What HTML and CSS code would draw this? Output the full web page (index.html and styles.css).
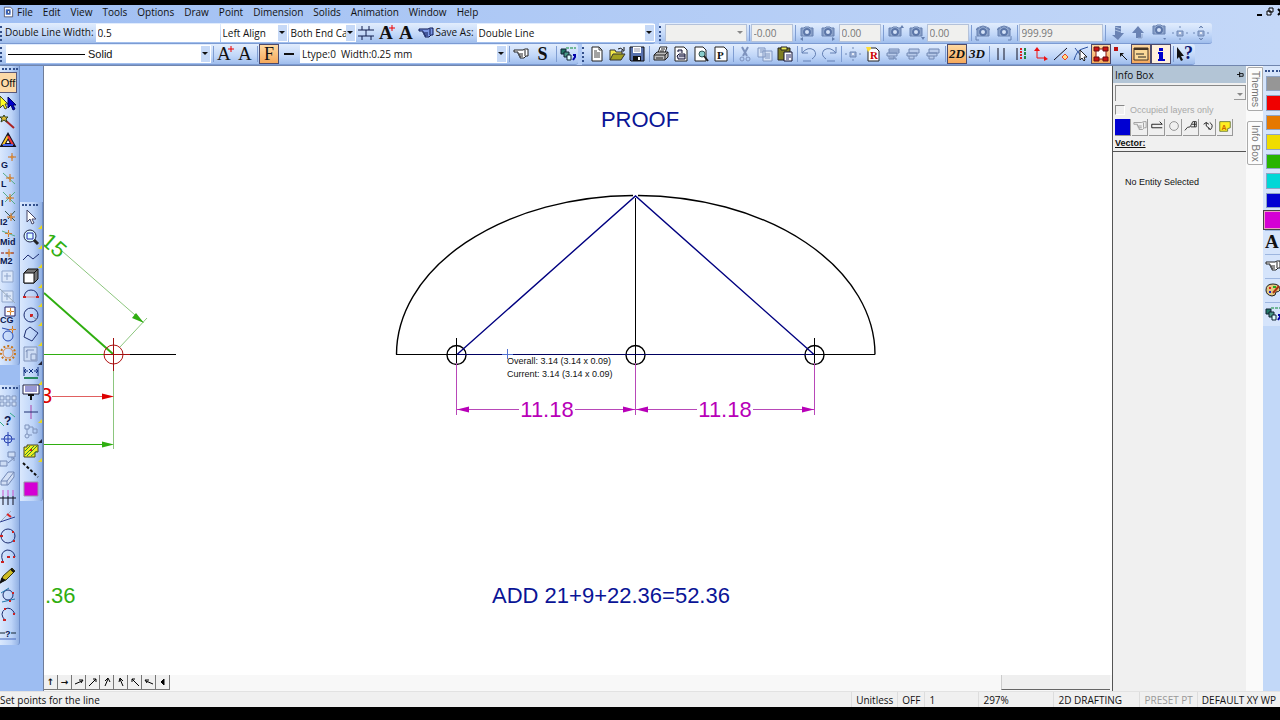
FILE: index.html
```html
<!DOCTYPE html>
<html lang="en">

<head>
    <meta charset="utf-8">
    <title>2D Drafting</title>
    <link rel="stylesheet" href="styles.css">
</head>

<body>
    <!-- shared icon shapes -->
    <svg class="defs" aria-hidden="true">
        <symbol id="camera" viewBox="0 0 16 16">
            <path d="M2 3h3l1-1h4l1 1h3v8H2z" fill="#a9bede" stroke="#6680b0" />
            <circle cx="8" cy="7" r="3" fill="#d5e3f8" stroke="#5c76a8" stroke-width="2" />
            <path d="M3 3v8M13 3v8" stroke="#6680b0" />
        </symbol>
        <symbol id="hand" viewBox="0 0 16 16">
            <path d="M1 4h9l2-1h3v7h-2l-2 2H7v-2H6V8H5V6H1zM6 8h4M7 10h3M12 4v6" />
        </symbol>
        <symbol id="layers" viewBox="0 0 16 16">
            <path d="M1 3h5v5H1z" fill="#276" stroke="#123" />
            <path d="M4 6h5v5H4z" fill="#4a9a88" stroke="#123" />
            <path d="M7 9h4v5H7z" fill="#dff" stroke="#123" />
            <path d="M6 2h3M10 2h3M14 2h2" stroke="#0a8a30" />
            <path d="M13 9h2v2l-2 3" fill="none" stroke="#00a" stroke-width="2" />
        </symbol>
        <symbol id="spark" viewBox="0 0 8 8">
            <path d="M4 0v8M0 4h8" stroke="#d07018" />
            <circle cx="4" cy="4" r="1" fill="#fff3a0" stroke="#d07018" />
        </symbol>
        <symbol id="move" viewBox="0 0 16 16">
            <path d="M5 6h6v5H5zM8 1v2M8 13v2M0 8h2M14 8h2" fill="#9fb3d8" stroke="#6f88b5" />
            <circle cx="8" cy="8" r="1" fill="#fff" />
        </symbol>
        <symbol id="plotter" viewBox="0 0 16 16">
            <path d="M4 3h10v4H4zM2 7h10v3H2zM4 10v3h5v-3" fill="#b9cbea" stroke="#7389b4" />
        </symbol>
        <symbol id="snapgrid" viewBox="0 0 16 16">
            <path d="M2 3h11v11H2zM7 5v7M4 8h7" fill="#dce8fa" stroke="#8fa5cb" />
        </symbol>
    </svg>

    <header class="top">
        <nav class="menu">
            <svg class="app-icon" viewBox="0 0 16 16">
                <path d="M2 1h9l3 3v11H2z" fill="#fff" stroke="#334" />
                <path d="M4 4h7v8H4z" fill="#3b6bd0" />
                <circle cx="8" cy="8" r="2" fill="#fff" stroke="#124" />
            </svg>
            <a href="#">File</a>
            <a href="#">Edit</a>
            <a href="#">View</a>
            <a href="#">Tools</a>
            <a href="#">Options</a>
            <a href="#">Draw</a>
            <a href="#">Point</a>
            <a href="#">Dimension</a>
            <a href="#">Solids</a>
            <a href="#">Animation</a>
            <a href="#">Window</a>
            <a href="#">Help</a>
            <svg class="window-buttons" viewBox="0 0 28 12">
                <path d="M1 9h5" stroke="#000" stroke-width="2" />
                <path d="M13 2h4v4h-4zM11 5h4v4h-4z" fill="#dde8fa" stroke="#000" />
                <path d="M22 3l6 6M28 3l-6 6" stroke="#000" stroke-width="2" />
            </svg>
        </nav>

        <div class="bars">
            <div class="bar">
                <i class="grip"></i>
                <label for="dlw">Double Line Width:</label>
                <input class="field w-width" id="dlw" value="0.5">
                <span class="combo w-align"><select aria-label="Alignment"><option>Left Align</option></select></span>
                <span class="combo w-align"><select aria-label="End caps"><option>Both End Caps</option></select></span>
                <button aria-label="Line joints"><svg viewBox="0 0 16 16"><path d="M0 5h16M0 11h16M4 1v4M11 1v4M8 5v6M4 11v4M13 11v4" stroke="#111d4d" /></svg></button>
                <button aria-label="Add text style"><svg viewBox="0 0 16 16"><text x="1" y="14" class="glyph-a">A</text><path d="M14 0v6M11 3h6" stroke="#e00" /></svg></button>
                <button aria-label="Text style"><svg viewBox="0 0 16 16"><text x="1" y="14" class="glyph-a">A</text></svg></button>
                <button aria-label="Pick style"><svg viewBox="0 0 16 16" fill="#7d98e6" stroke="#0b1650"><use href="#hand" /></svg></button>
                <label for="save">Save As:</label>
                <span class="combo w-save"><select id="save"><option>Double Line</option></select></span>
            </div>
            <div class="bar off">
                <i class="grip"></i>
                <span class="combo w-view"><select aria-label="View" disabled><option></option></select></span>
                <i class="sep"></i>
                <input class="field w-num" aria-label="Angle" value="-0.00" disabled>
                <i class="sep"></i>
                <button aria-label="Camera left" disabled><svg viewBox="0 0 16 16"><use href="#camera" /><path d="M4 12v4l-3-2z" fill="#6680b0" /></svg></button>
                <button aria-label="Camera right" disabled><svg viewBox="0 0 16 16"><use href="#camera" /><path d="M12 12v4l3-2z" fill="#6680b0" /></svg></button>
                <input class="field w-num" aria-label="Rotation" value="0.00" disabled>
                <i class="sep"></i>
                <button aria-label="Camera up" disabled><svg viewBox="0 0 16 16"><use href="#camera" /><path d="M13 3h4l-2-3z" fill="#6680b0" /></svg></button>
                <button aria-label="Camera down" disabled><svg viewBox="0 0 16 16"><use href="#camera" /><path d="M13 12h4l-2 3z" fill="#6680b0" /></svg></button>
                <input class="field w-num" aria-label="Height" value="0.00" disabled>
                <i class="sep"></i>
                <button aria-label="Tilt left" disabled><svg viewBox="0 0 16 16"><use href="#camera" /><path d="M1 5Q8-3 15 5M1 11v4h3" fill="none" stroke="#6680b0" /></svg></button>
                <button aria-label="Tilt right" disabled><svg viewBox="0 0 16 16"><use href="#camera" /><path d="M1 5Q8-3 15 5M15 11v4h-3" fill="none" stroke="#6680b0" /></svg></button>
                <i class="sep"></i>
                <input class="field w-dist" aria-label="Distance" value="999.99" disabled>
                <i class="sep"></i>
                <button aria-label="Zoom in" disabled><svg viewBox="0 0 16 16"><path d="M6 1h6v7h3l-6 7-6-5h3z" fill="#6a83b4" /><path d="M6 2l6 2M6 5l6 2" stroke="#a9bede" /></svg></button>
                <button aria-label="Zoom out" disabled><svg viewBox="0 0 16 16"><path d="M8 1l6 7h-3v5H6V8H2z" fill="#6a83b4" /><path d="M8 13h4V9" fill="none" stroke="#8fa5cb" /></svg></button>
                <button aria-label="Camera" disabled><svg viewBox="0 0 16 16"><use href="#camera" y="-2" /><path d="M12 13h3l-1 2z" fill="#6680b0" /></svg></button>
                <button aria-label="Pan" disabled><svg viewBox="0 0 16 16"><use href="#move" /></svg></button>
                <button aria-label="Orbit" disabled><svg viewBox="0 0 16 16"><use href="#move" /><path d="M6 3l2-2 2 2M6 13l2 2 2-2" fill="none" stroke="#6f88b5" /></svg></button>
            </div>
        </div>

        <div class="bars">
            <div class="bar">
                <i class="grip"></i>
                <span class="combo line-type w-type"><i class="line"></i><select aria-label="Line type"><option>Solid</option></select></span>
                <i class="sep"></i>
                <button aria-label="Larger text"><svg viewBox="0 0 16 16"><text x="0" y="14" class="glyph-a thin">A</text><path d="M14 0v6M11 3h6" stroke="#e00" /></svg></button>
                <button aria-label="Text"><svg viewBox="0 0 16 16"><text x="1" y="14" class="glyph-a thin">A</text></svg></button>
                <i class="sep"></i>
                <button class="on serif">F</button>
                <button aria-label="Weight"><svg viewBox="0 0 16 16"><path d="M3 8h10" stroke="#111" stroke-width="2" /></svg></button>
                <span class="combo w-ltype"><select aria-label="Line width"><option>Ltype:0&nbsp; Width:0.25 mm</option></select></span>
                <i class="sep"></i>
                <button aria-label="Pick"><svg viewBox="0 0 16 16" fill="#fff" stroke="#222"><use href="#hand" /></svg></button>
                <button class="serif heavy">S</button>
                <i class="sep"></i>
                <button aria-label="Layers"><svg viewBox="0 0 16 16"><use href="#layers" /></svg></button>
            </div>
            <div class="bar">
                <i class="grip"></i>
                <button aria-label="New"><svg viewBox="0 0 16 16"><path d="M3 1h7l3 3v11H3z" fill="#fff" stroke="#222" /><path d="M10 1v3h3M5 5h3M5 7h6M5 9h6M5 11h6" fill="none" stroke="#444" /></svg></button>
                <button aria-label="Open"><svg viewBox="0 0 16 16"><path d="M1 14V4h5l1 2h6v3" fill="#f2e84a" stroke="#333" /><path d="M1 14l3-6h12l-4 6z" fill="#a3a020" stroke="#333" /><path d="M9 3q3-2 5 1M15 1v4h-3" fill="none" stroke="#111" /></svg></button>
                <button aria-label="Save"><svg viewBox="0 0 16 16"><path d="M1 1h14v14H2l-1-1z" fill="#5871ad" stroke="#111" /><path d="M4 1h8v6H4z" fill="#fff" /><path d="M5 3h6M5 5h6" stroke="#99a" /><path d="M4 10h8v5H4z" fill="#111" /><path d="M9 11h2v3H9z" fill="#fff" /></svg></button>
                <i class="sep"></i>
                <button aria-label="Print"><svg viewBox="0 0 16 16"><path d="M5 7l2-6h7l-2 6" fill="#fff" stroke="#222" /><path d="M1 9l3-3h11v5l-3 3H1z" fill="#bbb" stroke="#222" /><path d="M1 9h11v5M12 9l3-3M3 12h7M8 3h4M7 5h4" fill="none" stroke="#222" /></svg></button>
                <button aria-label="Print setup"><svg viewBox="0 0 16 16"><path d="M2 1h9l3 3v11H2z" fill="#fff" stroke="#222" /><path d="M5 6V4h4v3M5 12l-1-2 2-2h6v5H5zM6 10h6" fill="#ccd" stroke="#113" /></svg></button>
                <button aria-label="Preview"><svg viewBox="0 0 16 16"><path d="M2 1h8l3 3v11H2z" fill="#fff" stroke="#222" /><circle cx="9" cy="8" r="3" fill="#8cc" stroke="#355" /><path d="M11 10l4 5" stroke="#222" stroke-width="2" /></svg></button>
                <button aria-label="Plot"><svg viewBox="0 0 16 16"><path d="M2 1h9l3 3v11H2z" fill="#fff" stroke="#222" /><text x="4" y="13" class="glyph-p">P</text></svg></button>
                <i class="sep"></i>
                <button aria-label="Cut"><svg viewBox="0 0 16 16"><path d="M5 1l5 9M11 1L6 10" stroke="#7d92bd" stroke-width="2" /><circle cx="5" cy="13" r="2" fill="none" stroke="#7d92bd" /><circle cx="11" cy="13" r="2" fill="none" stroke="#7d92bd" /></svg></button>
                <button aria-label="Copy"><svg viewBox="0 0 16 16"><path d="M1 2h7v9H1zM6 5h9v10H6z" fill="#d7e3f6" stroke="#7f95c0" /><path d="M3 4h4M3 6h3M8 8h5M8 10h5M8 12h5" stroke="#7f95c0" /></svg></button>
                <button aria-label="Paste"><svg viewBox="0 0 16 16"><path d="M1 2h12v12H1z" fill="#7e7d22" stroke="#222" /><path d="M4 1h6v3H4z" fill="#ee5" stroke="#222" /><path d="M7 6h8v9H7z" fill="#fff" stroke="#113" /><path d="M9 9h5M9 11h5M9 13h3" stroke="#226" /></svg></button>
                <i class="sep"></i>
                <button aria-label="Undo"><svg viewBox="0 0 16 16"><path d="M1 1v6h6M1 7q6-7 12-3 4 5-2 9M2 15h8" fill="none" stroke="#6480b4" /></svg></button>
                <button aria-label="Redo"><svg viewBox="0 0 16 16"><path d="M15 1v6H9M15 7Q9 0 3 4q-4 5 2 9M6 15h8" fill="none" stroke="#6480b4" /></svg></button>
                <i class="sep"></i>
                <button aria-label="Pan"><svg viewBox="0 0 16 16"><use href="#move" /></svg></button>
                <button aria-label="Redraw"><svg viewBox="0 0 16 16"><path d="M3 2h8l3 3v10H3z" fill="#fff" stroke="#222" /><path d="M1 1h5v2L3 6z" fill="#fd3" /><text x="5" y="13" class="glyph-p red">R</text></svg></button>
                <button aria-label="Plot all"><svg viewBox="0 0 16 16"><use href="#plotter" /><path d="M4 5h10M5 12h6v2" fill="none" stroke="#7389b4" /></svg></button>
                <button aria-label="Plot view"><svg viewBox="0 0 16 16"><use href="#plotter" /></svg></button>
                <button aria-label="Plot page"><svg viewBox="0 0 16 16"><use href="#plotter" /></svg></button>
                <i class="sep"></i>
                <button class="on dim">2D</button>
                <button class="dim">3D</button>
                <i class="sep"></i>
                <button aria-label="Parallel"><svg viewBox="0 0 16 16"><path d="M5 2v12M11 2v12" stroke="#112" /></svg></button>
                <button aria-label="Hatched lines"><svg viewBox="0 0 16 16"><path d="M4 2v12" stroke="#112" /><path d="M8 2v12" stroke="#d22" stroke-width="2" stroke-dasharray="2 1" /><path d="M12 2v12" stroke="#284" stroke-width="2" stroke-dasharray="3 1" /></svg></button>
                <button aria-label="Axes"><svg viewBox="0 0 16 16"><path d="M4 4v8h8" fill="none" stroke="#e11" /><path d="M1 5l3-4 3 4zM11 10l4 3-4 2z" fill="#e11" /></svg></button>
                <button aria-label="Line point"><svg viewBox="0 0 16 16"><path d="M1 14L14 2" stroke="#112" /><path d="M12 8l3 3-3 3-3-3z" fill="#fd8" stroke="#e42" /></svg></button>
                <button aria-label="Select line"><svg viewBox="0 0 16 16"><path d="M1 14Q4 4 9 3l6-2M2 2l9 12" fill="none" stroke="#2b51a0" /><path d="M7 4v10l2-2 2 3 1-1-1-3h3z" fill="#fff" stroke="#222" /></svg></button>
                <button class="on" aria-label="Handles"><svg viewBox="0 0 16 16"><path d="M3 3h10v10H3z" fill="#fff" stroke="#811" /><path d="M1 1h5v4H1zM10 1h5v4h-5zM1 11h5v4H1zM10 11h5v4h-5z" fill="#c11" stroke="#611" /></svg></button>
                <button aria-label="Snap"><svg viewBox="0 0 16 16"><path d="M1 1h4v4H1z" fill="#b11" /><path d="M8 8l6 6" stroke="#111" /><path d="M7 7h4l-4 4z" fill="#111" /></svg></button>
                <button class="on" aria-label="Info bar"><svg viewBox="0 0 16 16"><path d="M1 2h14v12H1z" fill="#fbd998" stroke="#432" /><path d="M1 3h14" stroke="#432" stroke-width="2" /><path d="M3 8h8M5 11h8" stroke="#222" /></svg></button>
                <button class="on pale" aria-label="Information"><svg viewBox="0 0 16 16"><path d="M6 2h4v3H6zM5 6h5v7h2v2H5v-2h1V8H5z" fill="#00c" /></svg></button>
                <i class="sep"></i>
                <button aria-label="Help pointer"><svg viewBox="0 0 16 16"><path d="M0 1v12l2-2 2 4 2-1-2-4h3z" fill="#111" /><text x="7" y="13" class="glyph-q">?</text></svg></button>
            </div>
        </div>
    </header>

    <main class="work">
        <aside class="tools first">
            <div class="stack">
                <i class="grip"></i>
                <button class="on">Off</button>
                <button aria-label="Pointers"><svg viewBox="0 0 16 16"><path d="M0 1v12l3-3 2 4 2-1-2-4h3z" fill="#ff2" stroke="#443" /><path d="M8 2v11l3-3 2 5 2-1-2-4h3z" fill="#00c" stroke="#006" /></svg></button>
                <button aria-label="Wand"><svg viewBox="0 0 16 16"><path d="M5 6l9 8" stroke="#a22" stroke-width="2" /><path d="M4 1l1 2h3L6 5l1 3-3-2-3 2 1-3-2-2h3z" fill="#db3" stroke="#342" /></svg></button>
                <button aria-label="Triangle"><svg viewBox="0 0 16 16"><path d="M8 3l5 9H3z" fill="#fff" stroke="#112" stroke-width="4" /><path d="M8 3L3 12" stroke="#fc2" stroke-width="2" /><path d="M8 3l5 9" stroke="#e33" stroke-width="2" /><path d="M3 12h10" stroke="#46e" stroke-width="2" /></svg></button>
                <button aria-label="Grid snap"><svg viewBox="0 0 16 16"><text x="1" y="15" class="glyph-s">G</text><use href="#spark" x="8" y="0" width="8" height="8" /></svg></button>
                <button aria-label="Line snap"><svg viewBox="0 0 16 16"><text x="1" y="15" class="glyph-s">L</text><path d="M3 1l12 11" stroke="#5a8" /><use href="#spark" x="6" y="2" width="8" height="8" /></svg></button>
                <button aria-label="Intersection"><svg viewBox="0 0 16 16"><text x="1" y="15" class="glyph-s">I</text><path d="M3 1l12 12M15 1L5 11" stroke="#5a8" /><use href="#spark" x="6" y="3" width="8" height="8" /></svg></button>
                <button aria-label="Intersection 2"><svg viewBox="0 0 16 16"><text x="0" y="15" class="glyph-s">I2</text><path d="M5 1l10 10M15 1L8 9" stroke="#355" /><use href="#spark" x="7" y="3" width="8" height="8" /></svg></button>
                <button aria-label="Midpoint"><svg viewBox="0 0 16 16"><path d="M2 1l13 5" stroke="#5a8" /><use href="#spark" x="5" y="0" width="7" height="7" /><text x="0" y="15" class="glyph-s">Mid</text></svg></button>
                <button aria-label="Mid 2"><svg viewBox="0 0 16 16"><path d="M1 4h14" stroke="#811" stroke-dasharray="3 2" /><use href="#spark" x="5" y="0" width="8" height="8" /><text x="0" y="15" class="glyph-s">M2</text></svg></button>
                <button aria-label="Snap square"><svg viewBox="0 0 16 16"><use href="#snapgrid" /></svg></button>
                <button aria-label="Snap diagonal"><svg viewBox="0 0 16 16"><use href="#snapgrid" /><path d="M0 1l15 14" stroke="#9ab" /></svg></button>
                <button aria-label="Centre of gravity"><svg viewBox="0 0 16 16"><path d="M5 0h10v9H5z" fill="#fff" stroke="#226" /><use href="#spark" x="7" y="1" width="7" height="7" /><text x="0" y="16" class="glyph-s">CG</text></svg></button>
                <button aria-label="Tangent"><svg viewBox="0 0 16 16" fill="none" stroke="#2a4cae"><circle cx="8" cy="10" r="5" /><path d="M2 2l8 2" /><use href="#spark" x="9" y="0" width="7" height="7" /></svg></button>
                <button aria-label="Quadrants"><svg viewBox="0 0 16 16" fill="none"><circle cx="8" cy="8" r="7" stroke="#c77518" stroke-width="2" stroke-dasharray="2 2" /><circle cx="8" cy="8" r="5" stroke="#d98a50" /></svg></button>
            </div>
            <div class="stack second">
                <i class="grip"></i>
                <button aria-label="Array"><svg viewBox="0 0 16 16"><path d="M0 3h4v4H0zM6 3h4v4H6zM12 3h4v4h-4zM0 9h4v4H0zM6 9h4v4H6zM12 9h4v4h-4z" fill="#cdddf5" stroke="#8095bd" /></svg></button>
                <button aria-label="Query"><svg viewBox="0 0 16 16"><path d="M0 10l4 4M10 1l5 4" stroke="#3a8" /><text x="4" y="13" class="glyph-s large">?</text></svg></button>
                <button aria-label="Target"><svg viewBox="0 0 16 16" fill="none" stroke="#2740b0"><circle cx="8" cy="8" r="4" /><path d="M8 1v14M1 8h14" /></svg></button>
                <button aria-label="Move copy"><svg viewBox="0 0 16 16"><path d="M8 1h7v5H8zM0 10h7v5H0zM8 12l6-5M11 7h3v3" fill="#cddcf4" stroke="#7288b5" /></svg></button>
                <button aria-label="Eraser"><svg viewBox="0 0 16 16"><path d="M1 11l7-9h6v5l-6 8H1zM1 11h6v4M7 11l7-9" fill="#d2dff5" stroke="#7288b5" /></svg></button>
                <button aria-label="Trim"><svg viewBox="0 0 16 16"><path d="M3 6v9M8 6v9M13 6v9M0 8h16" stroke="#112" /><path d="M3 0v6M8 0v6M13 0v6" stroke="#c5c" /></svg></button>
                <button aria-label="Angle"><svg viewBox="0 0 16 16"><path d="M0 13l15-5" stroke="#2a3c8e" /><path d="M1 12L11 2" stroke="#9ab" /><path d="M7 5l4 3" stroke="#d22" stroke-width="2" /></svg></button>
                <button aria-label="Circle points"><svg viewBox="0 0 16 16"><circle cx="8" cy="8" r="7" fill="none" stroke="#1e2e70" /><path d="M0 7h3v2H0zM12 3h2v2h-2zM13 12h2v2h-2z" fill="#c22" /></svg></button>
                <button aria-label="Arc centre"><svg viewBox="0 0 16 16"><path d="M3 14Q-1 4 7 2q7 0 8 7" fill="none" stroke="#1e2e70" /><path d="M7 8h3v2H7zM1 13h3v2H1zM13 8h2v2h-2z" fill="#c22" /></svg></button>
                <button aria-label="Pencil"><svg viewBox="0 0 16 16"><path d="M1 15l2-6 9-8 3 3-9 9z" fill="#cb2" stroke="#331" /><path d="M1 15l1-3 2 1zM11 2l3 3" fill="#111" stroke="#111" stroke-width="2" /></svg></button>
                <button aria-label="Tangent circle"><svg viewBox="0 0 16 16"><circle cx="8" cy="8" r="5" fill="none" stroke="#1e2e70" /><path d="M1 6l8-5M2 15l13-3" stroke="#27a" /><path d="M12 5h2v2h-2zM9 13h2v2H9z" fill="#c22" /></svg></button>
                <button aria-label="Arc points"><svg viewBox="0 0 16 16"><path d="M5 14Q-1 8 5 3q6-3 10 5" fill="none" stroke="#1e2e70" /><path d="M3 13h3v2H3zM4 2h2v2H4zM13 7h2v2h-2z" fill="#c22" /></svg></button>
                <button aria-label="Unknown line"><svg viewBox="0 0 16 16"><path d="M0 8h5M11 8h5" stroke="#123" /><path d="M0 14h16" stroke="#46b" /><text x="5" y="12" class="glyph-s">?</text></svg></button>
            </div>
        </aside>

        <aside class="tools draw">
            <div class="stack flyouts">
                <i class="grip"></i>
                <button aria-label="Select"><svg viewBox="0 0 16 16"><path d="M4 0v12l3-3 2 5 2-1-2-4h4z" fill="#fff" stroke="#446" /></svg></button>
                <button aria-label="Zoom"><svg viewBox="0 0 16 16"><circle cx="7" cy="7" r="6" fill="#dff" stroke="#224" /><path d="M4 4h6v6H4z" fill="none" stroke="#22a" /><path d="M11 11l4 4" stroke="#222" stroke-width="3" /></svg></button>
                <button aria-label="Polyline"><svg viewBox="0 0 16 16"><path d="M0 11l5-5 5 4 6-5" fill="none" stroke="#1e2e70" /></svg></button>
                <button aria-label="Solid box"><svg viewBox="0 0 16 16"><path d="M1 5l4-4h10v10l-4 4H1z" fill="#777" stroke="#111" /><path d="M1 5h10v10H1z" fill="#fff" stroke="#111" /><path d="M11 5l4-4" stroke="#111" /></svg></button>
                <button aria-label="Arc"><svg viewBox="0 0 16 16"><path d="M1 10Q2 3 8 3t7 7" fill="none" stroke="#1e2e70" /><path d="M2 10h12" stroke="#d88" /><path d="M0 9h3v2H0zM13 9h3v2h-3z" fill="#c22" /></svg></button>
                <button aria-label="Circle"><svg viewBox="0 0 16 16"><circle cx="8" cy="8" r="7" fill="none" stroke="#1e2e70" /><path d="M7 7h3v3H7z" fill="#c22" /><path d="M9 9l5 4" stroke="#888" /></svg></button>
                <button aria-label="Polygon"><svg viewBox="0 0 16 16"><path d="M7 1l8 6-6 8-8-4 2-7z" fill="none" stroke="#1e2e70" /></svg></button>
                <button class="dark" aria-label="Viewport"><svg viewBox="0 0 16 16"><path d="M1 1h13v14H1zM4 12V4h7M4 4l-1 2M8 8h5v6H8z" fill="#cddcf4" stroke="#7e92ba" /></svg></button>
                <button aria-label="Dimension"><svg viewBox="0 0 16 16"><path d="M1 2v9M15 2v9M1 6h4M11 6h4M6 4l4 4M10 4L6 8M3 4L1 6l2 2M13 4l2 2-2 2" fill="none" stroke="#113080" /><path d="M1 13h14" stroke="#298860" stroke-width="2" /></svg></button>
                <button class="bare" aria-label="Text"><svg viewBox="0 0 16 16"><path d="M0 1h16v9H0z" fill="#fff" stroke="#224" /><path d="M2 3h12M2 5h12M2 7h12" stroke="#33a" /><path d="M5 11h6M8 11v5" stroke="#111" stroke-width="2" /></svg></button>
                <button aria-label="Point"><svg viewBox="0 0 16 16"><path d="M8 1v14" stroke="#a4a" /><path d="M1 8h14" stroke="#1e2e70" /></svg></button>
                <button class="dark" aria-label="Symbols"><svg viewBox="0 0 16 16"><path d="M2 2h4v4H2zM10 6h4v4h-4zM6 4h4v2M4 6v5M6 12h3" fill="none" stroke="#7e92ba" /><circle cx="4" cy="13" r="2" fill="none" stroke="#7e92ba" /></svg></button>
                <button aria-label="Hatch"><svg viewBox="0 0 16 16"><path d="M1 4h3V2h11v7h-3v5H1z" fill="#ee2" stroke="#442" /><path d="M2 8l5-5M2 12l9-9M4 13L14 3M8 13l6-5" stroke="#383" /><path d="M7 6h2v2H7z" fill="#c22" /></svg></button>
                <button class="bare" aria-label="Line style"><svg viewBox="0 0 16 16"><path d="M0 1l15 14" stroke="#111" stroke-width="2" stroke-dasharray="3 2" /></svg></button>
                <button class="bare" aria-label="Colour"><svg viewBox="0 0 16 16"><path d="M1 1h14v14H1z" fill="#d400d4" stroke="#99a" /></svg></button>
            </div>
        </aside>

        <section class="sheet">
            <svg class="drawing" role="img" aria-label="Drawing">
                <g transform="translate(-44 -66)" fill="none">
                    <!-- side view, running off the left edge -->
                    <g stroke="#2fae10">
                        <path d="M62 251L143 322M120 347l27-29M113.500 354v95" stroke="#8cc67e" />
                        <path d="M44 293l69 61" stroke-width="2" />
                        <path d="M44 354.500h69M44 444.500h60" />
                        <path d="M144 323l-12-5 4-5zM114 444.500l-12-3v6z" fill="#2fae10" stroke="none" />
                    </g>
                    <path d="M123 354.500h53" stroke="#000" />
                    <g stroke="#d00">
                        <circle cx="113.500" cy="354.500" r="9.500" stroke="#b01010" />
                        <path d="M113.500 338v33M104 354.500h26" stroke="#a01010" />
                        <path d="M52 396.500h52" stroke="#e06060" />
                        <path d="M114 396.500l-12-3v6z" fill="#d00" stroke="none" />
                    </g>
                    <g class="note green">
                        <text x="45" y="603">.36</text>
                        <text transform="translate(40 243) rotate(41)">15</text>
                    </g>
                    <text class="note red" x="40" y="403">3</text>

                    <!-- half ellipse with its focal triangle -->
                    <g stroke="#000">
                        <g class="curve">
                            <path d="M396.500 354.500A239 159 0 0 1 633 195.500M638 195.500A239 159 0 0 1 875 354.500" />
                            <circle cx="456.500" cy="355" r="9.500" />
                            <circle cx="635.500" cy="355" r="9.500" />
                            <circle cx="814.500" cy="355" r="9.500" />
                        </g>
                        <path d="M396 354.500h479M635.500 198v173M456.500 338v33M814.500 338v33" />
                    </g>
                    <path class="curve" d="M457 354.500L635.500 196 814 354.500" stroke="#000080" />
                    <path d="M457 354.500h357" stroke="#000060" />
                    <path d="M507.500 349v10M502 354.500h11" stroke="#5070d0" />

                    <g stroke="#b848b8">
                        <path d="M456.500 363v52M635.500 363v52M814.500 363v52" />
                        <path d="M457 409.500h62M575 409.500h122M753 409.500h61" />
                        <path d="M457 409.500l12-3v6zM635 409.500l-12-3v6zM636 409.500l12-3v6zM814 409.500l-12-3v6z" fill="#b800b8" stroke="none" />
                    </g>
                    <g class="note magenta">
                        <text x="547" y="417">11.18</text>
                        <text x="725" y="417">11.18</text>
                    </g>
                    <g class="note blue">
                        <text x="640" y="127">PROOF</text>
                        <text x="611" y="603">ADD 21+9+22.36=52.36</text>
                    </g>
                    <g class="readout">
                        <text x="507" y="364">Overall: 3.14 (3.14 x 0.09)</text>
                        <text x="507" y="377">Current: 3.14 (3.14 x 0.09)</text>
                    </g>
                </g>
            </svg>
            <div class="scroll">
                <button aria-label="Up">↑</button>
                <button aria-label="Right">→</button>
                <button aria-label="Slight up right"><svg viewBox="0 0 10 10"><path d="M1 7l7-3M5 3h4L7 6" /></svg></button>
                <button aria-label="Up right"><svg viewBox="0 0 10 10"><path d="M1 9l7-7M5 2h3v3" /></svg></button>
                <button aria-label="Steep up right"><svg viewBox="0 0 10 10"><path d="M3 9l3-7M3 4l3-3 2 4" /></svg></button>
                <button aria-label="Steep up left"><svg viewBox="0 0 10 10"><path d="M7 9L4 2M3 5l1-4 3 3" /></svg></button>
                <button aria-label="Up left"><svg viewBox="0 0 10 10"><path d="M9 9L2 2M5 2H2v3" /></svg></button>
                <button aria-label="Slight up left"><svg viewBox="0 0 10 10"><path d="M9 7L2 4M5 3H1l2 3" /></svg></button>
                <button aria-label="Scroll left"><svg viewBox="0 0 10 10"><path d="M6 2v6L3 5z" fill="#000" /></svg></button>
                <i class="thumb"></i>
            </div>
        </section>

        <aside class="info">
            <h2>Info Box
                <svg viewBox="0 0 8 8"><path d="M0 4h3M3 1v6M3 3h4v3H3" fill="none" stroke="#000" /></svg>
            </h2>
            <div class="info-top">
                <span class="combo flat"><select aria-label="Layer" disabled><option></option></select></span>
                <label class="occupied"><input type="checkbox" disabled>Occupied layers only</label>
                <div class="info-buttons">
                    <button class="swatch blue" aria-label="Blue"></button>
                    <button aria-label="Pick"><svg viewBox="0 0 16 16" fill="none" stroke="#999"><use href="#hand" /></svg></button>
                    <button aria-label="Weight"><svg viewBox="0 0 16 16"><path d="M2 6h12l-3-3M2 10h12M2 6v4" fill="none" stroke="#111" /></svg></button>
                    <button aria-label="Circle"><svg viewBox="0 0 16 16"><circle cx="8" cy="8" r="5" fill="none" stroke="#888" /></svg></button>
                    <button aria-label="Edit curve"><svg viewBox="0 0 16 16"><path d="M1 13q3-5 6-4l3-6h4v6H8M9 6h5M12 3v6" fill="none" stroke="#222" /></svg></button>
                    <button aria-label="Rotate"><svg viewBox="0 0 16 16"><path d="M3 6l3-2 3 2M6 4v4l4 3M10 4q5 3 1 8l-3-1" fill="none" stroke="#111" /></svg></button>
                    <button aria-label="Attributes"><svg viewBox="0 0 16 16"><path d="M2 3h12v7l-3 1v3H2z" fill="#fe2" stroke="#673" /><text x="4" y="12" class="glyph-m">A</text></svg></button>
                </div>
                <strong>Vector:</strong>
            </div>
            <div class="info-body">No Entity Selected</div>
        </aside>

        <nav class="tabs">
            <button>Themes</button>
            <button>Info Box</button>
        </nav>

        <aside class="palette">
            <div class="colors">
                <i class="grip"></i>
                <button class="swatch gray" aria-label="Gray"></button>
                <button class="swatch red" aria-label="Red"></button>
                <button class="swatch orange" aria-label="Orange"></button>
                <button class="swatch yellow" aria-label="Yellow"></button>
                <button class="swatch green" aria-label="Green"></button>
                <button class="swatch cyan" aria-label="Cyan"></button>
                <button class="swatch blue" aria-label="Blue"></button>
                <button class="swatch magenta picked" aria-label="Magenta"></button>
                <button class="more" aria-label="Text"><svg viewBox="0 0 16 16"><text x="0" y="14" class="glyph-a">A</text></svg></button>
                <button class="more" aria-label="Pick"><svg viewBox="0 0 16 16" fill="#fff" stroke="#222"><use href="#hand" /></svg></button>
                <button class="more" aria-label="Palette"><svg viewBox="0 0 16 16"><path d="M1 8q0-6 7-6t7 6q-1 2-4 2 0 4-4 4Q1 13 1 8z" fill="#e4c780" stroke="#222" /><path d="M4 5h2v2H4z" fill="#d22" /><path d="M8 4h3v2H8z" fill="#2a2" /><path d="M4 9h2v2H4z" fill="#22c" /><path d="M8 11l6-7" stroke="#a31" stroke-width="2" /></svg></button>
                <button class="more" aria-label="Layers"><svg viewBox="0 0 16 16"><use href="#layers" /></svg></button>
            </div>
        </aside>
    </main>

    <footer class="status">
        <span class="hint">Set points for the line</span>
        <span class="cell">Unitless</span>
        <span class="cell">OFF</span>
        <span class="cell scale">1</span>
        <span class="cell zoom">297%</span>
        <span class="cell mode">2D DRAFTING</span>
        <span class="cell faint">PRESET PT</span>
        <span class="cell">DEFAULT XY WP</span>
    </footer>
</body>

</html>
```
FILE: styles.css
```css
* {
    box-sizing: border-box;
}

body {
    margin: 0;
    height: 100vh;
    padding: 5px 0 13px;
    display: flex;
    flex-direction: column;
    overflow: hidden;
    background: #000;
    color: #111;
    font: 10px/14px "Open Sans", "Noto Sans", sans-serif;
}

button,
input,
select {
    font: inherit;
    color: inherit;
    margin: 0;
    padding: 0;
    border: 0;
    border-radius: 0;
    background: none;
}

button svg {
    overflow: visible;
}

.defs {
    position: absolute;
    width: 0;
    height: 0;
}

/* menu and toolbars */
.top {
    background: linear-gradient(90deg, #a0bff3, #c4d8f8);
    border-bottom: 1px solid #7186ae;
}

.menu {
    display: flex;
    align-items: center;
    gap: 10px;
    height: 18px;
    padding: 0 0 4px 3px;
}

.menu a {
    color: #111;
    text-decoration: none;
}

.app-icon {
    width: 11px;
    height: 12px;
    margin-right: -7px;
}

.window-buttons {
    width: 28px;
    height: 12px;
    margin-left: auto;
    margin-right: -4px;
}

.bars {
    display: flex;
    gap: 4px;
    height: 21px;
}

.bar {
    display: flex;
    align-items: center;
    flex: none;
    background: linear-gradient(#e2edfd, #c0d6f8 60%, #9fbdec);
    border-bottom: 1px solid #7c9bd3;
    border-radius: 0 3px 3px 0;
}

.bar .grip {
    width: 3px;
    height: 15px;
    margin: 0 2px 0 0;
    border-left: 2px dotted #33508c;
}

.bar label {
    padding: 0 2px 2px 0;
}

.bar button {
    width: 20px;
    height: 20px;
    display: flex;
    align-items: center;
    justify-content: center;
}

.bar button svg {
    width: 16px;
    height: 16px;
}

.sep {
    width: 1px;
    height: 16px;
    margin: 0 1px 0 2px;
    background: #7f9dd2;
}

.bar .on {
    background: linear-gradient(#ffd9a0, #f5a95c);
    border: 1px solid #4d4a6b;
}

.bar .pale {
    background: #fff0dc;
}

.field,
.combo {
    height: 18px;
    background: #fff;
}

.field {
    padding-left: 2px;
}

.combo {
    display: flex;
    position: relative;
    margin-left: 1px;
}

.combo select {
    appearance: none;
    flex: 1;
    min-width: 0;
    height: 100%;
    padding: 0 10px 0 2px;
    background: #fff;
}

.combo::before {
    content: "";
    position: absolute;
    top: 1px;
    right: 1px;
    bottom: 1px;
    width: 9px;
    background: #c6d9f7;
}

.combo::after {
    content: "";
    position: absolute;
    top: 7px;
    right: 3px;
    border: 3px solid transparent;
    border-top-color: #111;
    border-bottom: 0;
}

.off .field,
.off .combo,
.off select {
    background: #f0f0ee;
    color: #777;
    opacity: 1;
}

.off .field,
.off .combo {
    border: 1px solid #b4c2da;
}

.off .combo::before {
    background: none;
}

.off .combo::after {
    top: 6px;
    border-top-color: #888;
}

.off button {
    width: 21px;
}

.w-width { width: 124px; }
.w-align { width: 67px; }
.w-save { width: 178px; }
.w-view { width: 82px; }
.w-num { width: 42px; }
.w-dist { width: 84px; }
.w-type { width: 205px; }
.w-ltype { width: 207px; }

.line-type {
    align-items: center;
    font: 11px/14px "Liberation Sans", Arial, sans-serif;
}

.line-type .line {
    width: 77px;
    height: 1px;
    margin: 0 1px 0 2px;
    background: #000;
}

.serif {
    font: 18px/18px "Liberation Serif", "Times New Roman", serif;
}

.bar .heavy {
    width: 23px;
    font-weight: bold;
}

.dim {
    font: italic bold 13px/18px "Liberation Serif", "Times New Roman", serif;
}

.glyph-a {
    font: bold 19px "Liberation Serif", serif;
    fill: #111;
    stroke: none;
}

.glyph-a.thin {
    font-weight: normal;
}

.glyph-p {
    font: bold 11px "Liberation Serif", serif;
    fill: #111;
}

.glyph-p.red {
    fill: #c00;
}

.glyph-q {
    font: bold 18px "Liberation Serif", serif;
    fill: #0a1470;
}

.glyph-s {
    font: bold 9px "Liberation Sans", sans-serif;
    fill: #0a1850;
    stroke: none;
}

.glyph-s.large {
    font-size: 12px;
}

.glyph-m {
    font: bold 8px "Liberation Sans", sans-serif;
    fill: #c60;
}

/* work area */
.work {
    flex: 1;
    display: flex;
    min-height: 0;
    background: #9dbdf2;
}

.tools {
    flex: none;
    overflow: hidden;
}

.first {
    width: 20px;
}

.draw {
    width: 23px;
    padding-top: 136px;
}

.stack {
    display: flex;
    flex-direction: column;
    height: 299px;
    padding: 2px 2px 2px 0;
    background: linear-gradient(90deg, #dae8fd, #bdd4f8 60%, #91b0e3);
    border-right: 1px solid #6e8fca;
    border-radius: 0 0 3px 0;
}

.second {
    height: 260px;
    margin-top: 20px;
}

.stack .grip,
.palette .grip {
    height: 4px;
    width: 16px;
    margin-left: 2px;
    border-top: 2px dotted #33508c;
}

.stack button {
    position: relative;
    flex: 1;
    min-height: 0;
    width: 18px;
    margin-left: -1px;
    display: flex;
    align-items: center;
    justify-content: center;
}

.stack button svg {
    flex: none;
    width: 16px;
    height: 16px;
}

.stack .on {
    background: #fbd9a8;
    border: 1px solid #5a5878;
    font: 11px/16px "Liberation Sans", Arial, sans-serif;
}

.flyouts button {
    width: 22px;
    margin-left: 0;
}

.flyouts button::after {
    content: "";
    position: absolute;
    right: 0;
    bottom: -2px;
    border: 2px solid #e8d820;
    border-top-color: transparent;
    border-left-color: transparent;
}

.flyouts .dark::after {
    border-right-color: #223;
    border-bottom-color: #223;
}

.flyouts .bare::after {
    display: none;
}

/* drawing sheet */
.sheet {
    flex: 1;
    display: flex;
    flex-direction: column;
    min-width: 0;
    background: #fff;
    border-left: 1px solid #6f7d98;
}

.drawing {
    flex: 1;
    width: 100%;
    min-height: 0;
}

.curve {
    stroke-width: 1.4;
}

.note {
    font: 22px "Liberation Sans", Arial, sans-serif;
}

.note.green { fill: #2fae10; }
.note.red { fill: #d00; }
.note.magenta { fill: #b800b8; text-anchor: middle; }
.note.blue { fill: #0a1496; text-anchor: middle; }

.readout {
    font: 9px "Liberation Sans", Arial, sans-serif;
    fill: #111;
}

.scroll {
    display: flex;
    height: 16px;
    padding-bottom: 1px;
    background: #f8f8f8;
}

.scroll button {
    width: 14px;
    display: flex;
    align-items: center;
    justify-content: center;
    background: #f0f0f0;
    border: 1px solid #777;
    border-width: 0 1px 1px 0;
    font: bold 9px/12px "DejaVu Sans", sans-serif;
}

.scroll button svg {
    width: 10px;
    height: 10px;
    fill: none;
    stroke: #000;
}

.thumb {
    width: 109px;
    margin: 0 2px 0 auto;
    background: #efefef;
    border-bottom: 1px solid #666;
    border-left: 1px solid #ccc;
}

/* info box */
.info {
    flex: none;
    display: flex;
    flex-direction: column;
    width: 134px;
    background: #f0f0f0;
    border-left: 1px solid #555;
}

.info h2 {
    display: flex;
    align-items: center;
    justify-content: space-between;
    height: 17px;
    margin: 0;
    padding: 0 2px;
    background: #b3c5d6;
    font-size: 10px;
    font-weight: normal;
}

.info h2 svg {
    width: 7px;
    height: 7px;
}

.info-top {
    display: flex;
    flex-direction: column;
    padding: 2px 0 0 2px;
}

.flat {
    height: 16px;
    margin: 0;
    border: 1px solid #888;
    border-width: 1px 0 0 1px;
}

.flat select {
    background: #f0f0f0;
    opacity: 1;
}

.flat::before {
    top: 0;
    right: 0;
    width: 11px;
    background: #f0f0f0;
    border: 1px solid #999;
    border-width: 0 1px 1px 0;
}

.flat::after {
    border-top-color: #888;
}

.occupied {
    display: flex;
    align-items: center;
    gap: 5px;
    height: 18px;
    color: #a8a8a8;
    font: 9px/14px "Liberation Sans", Arial, sans-serif;
}

.occupied input {
    appearance: none;
    width: 10px;
    height: 10px;
    border: 1px solid #888;
    border-color: #888 #fff #fff #888;
}

.info-buttons {
    display: flex;
    height: 17px;
}

.info-buttons button {
    width: 16px;
    height: 17px;
    margin-right: 1px;
    border: 1px solid #999;
    border-width: 0 1px 1px 0;
}

.info-buttons button svg {
    width: 14px;
    height: 14px;
}

.info strong {
    font: bold 9px/14px "Liberation Sans", Arial, sans-serif;
    text-decoration: underline;
}

.info-body {
    flex: 1;
    margin-top: 1px;
    padding: 23px 12px;
    border-top: 1px solid #555;
    font: 9px/14px "Liberation Sans", Arial, sans-serif;
}

.tabs {
    flex: none;
    display: flex;
    flex-direction: column;
    align-items: flex-end;
    gap: 10px;
    width: 17px;
    padding-top: 1px;
    background: #fafafa;
}

.tabs button {
    width: 16px;
    height: 44px;
    writing-mode: vertical-rl;
    background: #fcfcfc;
    border: 1px solid #aaa;
    border-radius: 2px 0 0 2px;
    color: #777;
    font: 10px/14px "Liberation Sans", Arial, sans-serif;
}

.palette {
    flex: none;
    width: 17px;
    overflow: hidden;
    background: #c2d8f8;
}

.colors {
    display: flex;
    flex-direction: column;
    width: 22px;
    height: 260px;
    padding-top: 4px;
    background: #d5e4fb;
}

.colors button {
    flex: 1;
    margin: 2px 0 2px 3px;
    border: 1px solid #8fa4c4;
}

.colors .picked {
    flex: none;
    height: 20px;
    margin: 0;
    border: 2px solid #e8a0c0;
    outline: 1px solid #444;
    outline-offset: -1px;
}

.colors .more {
    display: flex;
    align-items: center;
    flex: none;
    height: 24px;
    margin: 0 0 0 2px;
    border: 0;
    border-top: 1px solid #9db6df;
}

.more svg {
    width: 16px;
    height: 16px;
}

.swatch.gray { background-color: #969696; }
.swatch.red { background-color: #f00000; }
.swatch.orange { background-color: #e57800; }
.swatch.yellow { background-color: #f0dc00; }
.swatch.green { background-color: #28b400; }
.swatch.cyan { background-color: #00d7d7; }
.swatch.blue { background-color: #0000d2; }
.swatch.magenta { background-color: #d400d4; }

/* status bar */
.status {
    display: flex;
    height: 16px;
    overflow: hidden;
    background: #f0f0f0;
    border-top: 1px solid #e2e2e2;
    line-height: 16px;
    white-space: nowrap;
}

.hint {
    flex: 1;
}

.cell {
    padding: 0 4px;
    border-left: 1px solid #ddd;
}

.scale { width: 54px; }
.zoom { width: 75px; }
.mode { width: 86px; }

.faint {
    color: #999;
}
```
